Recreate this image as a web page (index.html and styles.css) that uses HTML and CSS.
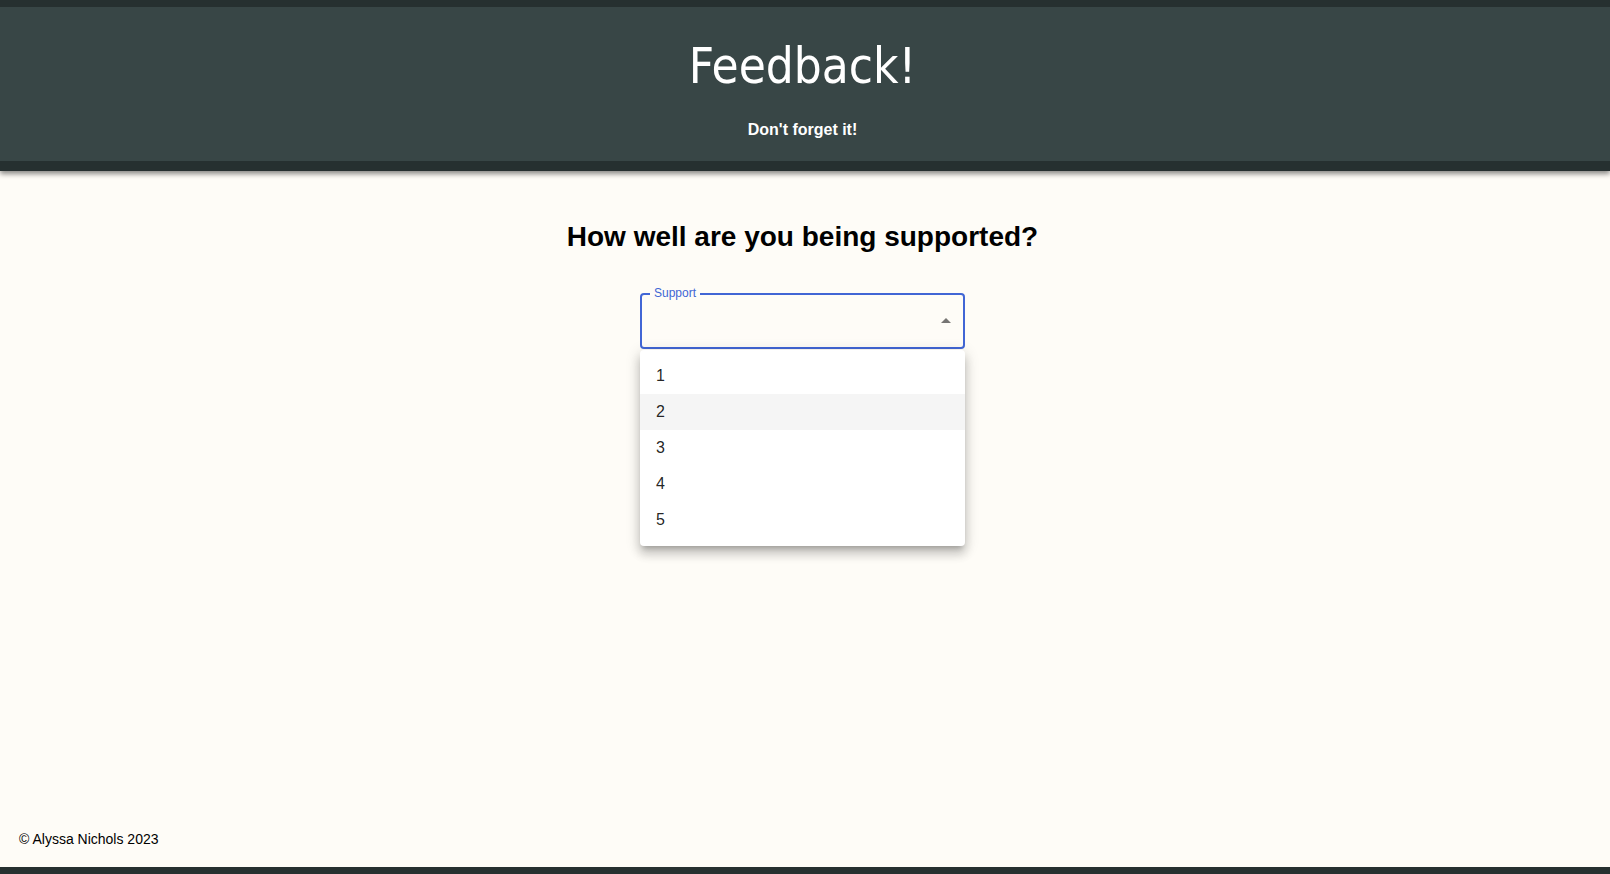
FILE: index.html
```html
<!DOCTYPE html>
<html lang="en">
<head>
<meta charset="utf-8">
<title>Feedback!</title>
<link rel="stylesheet" href="styles.css">
</head>
<body>
  <header class="site-header">
    <h1 class="site-title">Feedback!</h1>
    <p class="site-tagline">Don't forget it!</p>
  </header>
  <main class="content">
    <h2 class="question">How well are you being supported?</h2>
    <div class="select-wrap">
      <div class="select-field">
        <span class="select-label">Support</span>
        <svg class="select-arrow" viewBox="0 0 24 24" width="24" height="24" aria-hidden="true"><path d="M7 14l5-5 5 5z"/></svg>
      </div>
      <ul class="menu">
        <li class="menu-item">1</li>
        <li class="menu-item is-hover">2</li>
        <li class="menu-item">3</li>
        <li class="menu-item">4</li>
        <li class="menu-item">5</li>
      </ul>
    </div>
  </main>
  <footer class="site-footer">© Alyssa Nichols 2023</footer>
</body>
</html>
```
FILE: styles.css
```css
html, body {
  margin: 0;
  padding: 0;
}
body {
  min-height: 100vh;
  display: flex;
  flex-direction: column;
  background: #fefcf7;
  font-family: "Liberation Sans", Arial, Helvetica, sans-serif;
  color: #000;
}
.site-header {
  position: relative;
  z-index: 2;
  background: #384646;
  border-top: 7px solid #263030;
  border-bottom: 10px solid #263030;
  box-shadow: 0 3px 5px rgba(0, 0, 0, 0.45);
  padding: 31px 5px 22px 0;
  text-align: center;
  color: #fff;
}
.site-title {
  margin: 0;
  font-family: "DejaVu Sans Condensed", "DejaVu Sans", sans-serif;
  font-stretch: condensed;
  font-weight: normal;
  font-size: 49px;
  line-height: 58px;
}
.site-tagline {
  margin: 25px 0 0;
  font-weight: bold;
  font-size: 16px;
  line-height: 18px;
}
.content {
  flex: 1;
  padding: 50px 5px 0 0;
  display: flex;
  flex-direction: column;
  align-items: center;
}
.question {
  margin: 0;
  font-size: 28px;
  line-height: 32px;
  font-weight: bold;
}
.select-wrap {
  position: relative;
  margin-top: 40px;
  width: 325px;
}
.select-field {
  position: relative;
  box-sizing: border-box;
  height: 56px;
  border: 2px solid #4166d5;
  border-radius: 4px;
}
.select-label {
  position: absolute;
  left: 8px;
  top: -9px;
  padding: 0 4px;
  background: #fefcf7;
  color: #4166d5;
  font-size: 12px;
  line-height: 14px;
}
.select-arrow {
  position: absolute;
  right: 5px;
  top: 14px;
  fill: #767573;
}
.menu {
  position: absolute;
  left: 0;
  top: 57px;
  width: 325px;
  box-sizing: border-box;
  margin: 0;
  padding: 8px 0;
  list-style: none;
  background: #fff;
  border-radius: 4px;
  box-shadow: 0 5px 5px -3px rgba(0, 0, 0, 0.2), 0 8px 10px 1px rgba(0, 0, 0, 0.14), 0 3px 14px 2px rgba(0, 0, 0, 0.12);
}
.menu-item {
  height: 36px;
  padding: 0 16px;
  font-size: 16px;
  line-height: 35px;
  color: rgba(0, 0, 0, 0.87);
}
.menu-item.is-hover {
  background: #f5f5f5;
}
.site-footer {
  padding: 0 19px 20px;
  font-size: 14px;
  line-height: 16px;
  border-bottom: 7px solid #263030;
}
```
